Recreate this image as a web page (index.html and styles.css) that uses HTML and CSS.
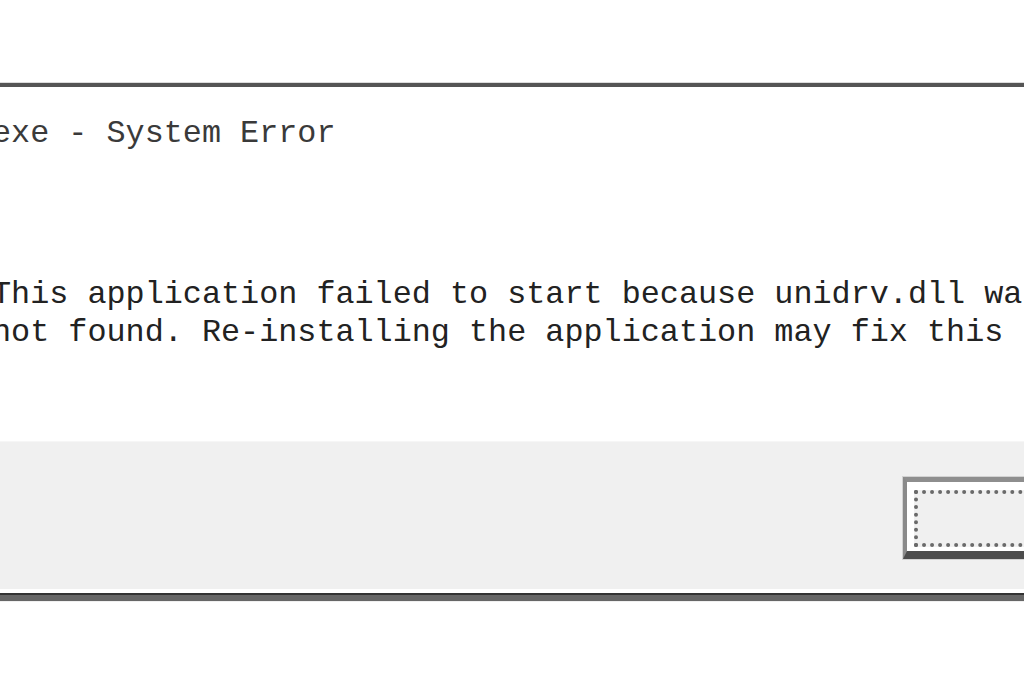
FILE: index.html
```html
<!DOCTYPE html>
<html lang="en">
<head>
<meta charset="utf-8">
<title>System Error</title>
<link rel="stylesheet" href="styles.css">
</head>
<body>
<div class="window">
  <div class="frame-top"></div>
  <div class="titlebar">exe - System Error</div>
  <div class="message">
    <p class="line">This application failed to start because unidrv.dll was</p>
    <p class="line">not found. Re-installing the application may fix this problem.</p>
  </div>
  <div class="footer-edge"></div>
  <div class="footer">
    <div class="btn">
      <div class="btn-frame">
        <div class="btn-focus"></div>
      </div>
    </div>
  </div>
  <div class="frame-bottom"></div>
</div>
</body>
</html>
```

FILE: styles.css
```css
html, body {
  margin: 0;
  padding: 0;
  background: #ffffff;
  overflow: hidden;
  height: 683px;
}

.window {
  width: 1300px;
  margin-top: 82px;
  margin-left: -8px;
  font-family: "Liberation Mono", "DejaVu Sans Mono", monospace;
  font-size: 31.8px;
  line-height: 38px;
}

.frame-top {
  height: 1px;
  background: #dcdcdc;
  border-bottom: 4px solid #555555;
}

.titlebar {
  margin-top: 28px;
  padding-left: 0;
  color: #3a3a3a;
  white-space: nowrap;
}

.message {
  padding-top: 123px;
  padding-bottom: 89px;
  color: #222222;
}

.line {
  margin: 0;
  white-space: nowrap;
}

.footer-edge {
  height: 1px;
  background: #f6f6f6;
}

.footer {
  background: #f0f0f0;
  height: 147px;
  padding-left: 910px;
  padding-top: 34px;
  box-sizing: border-box;
  display: flex;
  align-items: flex-start;
}

.btn {
  width: 240px;
  border: 1px solid #d2d2d2;
}

.btn-frame {
  border-top: 5px solid #8e8e8e;
  border-left: 4px solid #8a8a8a;
  border-bottom: 8px solid #4c4c4c;
  background: #ffffff;
  padding: 8px 0 4px 7px;
}

.btn-focus {
  height: 49px;
  border: 4px dotted #6a6a6a;
  border-right: none;
  background: #f0f0f0;
}

.frame-bottom {
  height: 6px;
  margin-top: 4px;
  background: #666666;
  border-top: 2px solid #333333;
  border-bottom: 1px solid #f0f0f0;
}
```
